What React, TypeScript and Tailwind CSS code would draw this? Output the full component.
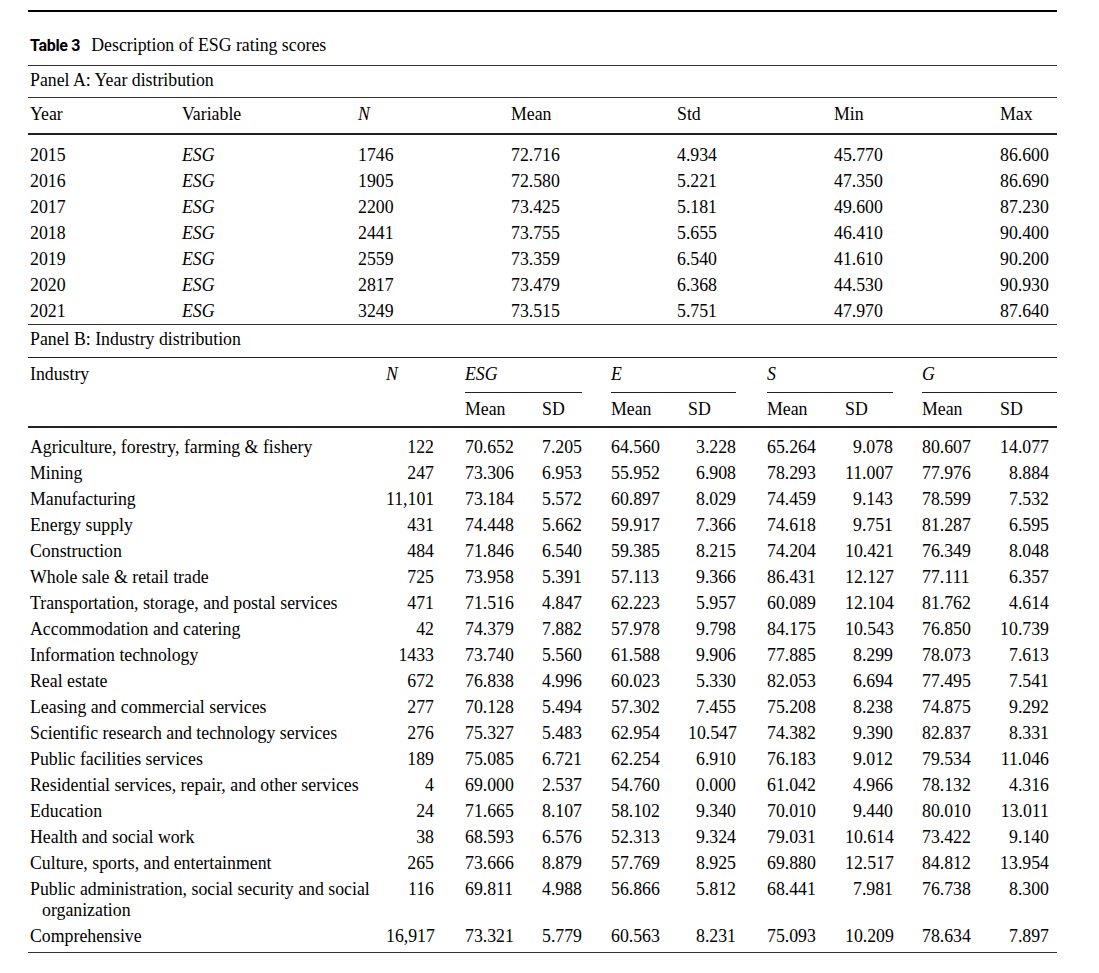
import React from 'react';

const yearRows = [
  ['2015', '1746', '72.716', '4.934', '45.770', '86.600'],
  ['2016', '1905', '72.580', '5.221', '47.350', '86.690'],
  ['2017', '2200', '73.425', '5.181', '49.600', '87.230'],
  ['2018', '2441', '73.755', '5.655', '46.410', '90.400'],
  ['2019', '2559', '73.359', '6.540', '41.610', '90.200'],
  ['2020', '2817', '73.479', '6.368', '44.530', '90.930'],
  ['2021', '3249', '73.515', '5.751', '47.970', '87.640'],
];

// industry, N, ESG mean/sd, E mean/sd, S mean/sd, G mean/sd
const industryRows = [
  ['Agriculture, forestry, farming & fishery', '122', '70.652', '7.205', '64.560', '3.228', '65.264', '9.078', '80.607', '14.077'],
  ['Mining', '247', '73.306', '6.953', '55.952', '6.908', '78.293', '11.007', '77.976', '8.884'],
  ['Manufacturing', '11,101', '73.184', '5.572', '60.897', '8.029', '74.459', '9.143', '78.599', '7.532'],
  ['Energy supply', '431', '74.448', '5.662', '59.917', '7.366', '74.618', '9.751', '81.287', '6.595'],
  ['Construction', '484', '71.846', '6.540', '59.385', '8.215', '74.204', '10.421', '76.349', '8.048'],
  ['Whole sale & retail trade', '725', '73.958', '5.391', '57.113', '9.366', '86.431', '12.127', '77.111', '6.357'],
  ['Transportation, storage, and postal services', '471', '71.516', '4.847', '62.223', '5.957', '60.089', '12.104', '81.762', '4.614'],
  ['Accommodation and catering', '42', '74.379', '7.882', '57.978', '9.798', '84.175', '10.543', '76.850', '10.739'],
  ['Information technology', '1433', '73.740', '5.560', '61.588', '9.906', '77.885', '8.299', '78.073', '7.613'],
  ['Real estate', '672', '76.838', '4.996', '60.023', '5.330', '82.053', '6.694', '77.495', '7.541'],
  ['Leasing and commercial services', '277', '70.128', '5.494', '57.302', '7.455', '75.208', '8.238', '74.875', '9.292'],
  ['Scientific research and technology services', '276', '75.327', '5.483', '62.954', '10.547', '74.382', '9.390', '82.837', '8.331'],
  ['Public facilities services', '189', '75.085', '6.721', '62.254', '6.910', '76.183', '9.012', '79.534', '11.046'],
  ['Residential services, repair, and other services', '4', '69.000', '2.537', '54.760', '0.000', '61.042', '4.966', '78.132', '4.316'],
  ['Education', '24', '71.665', '8.107', '58.102', '9.340', '70.010', '9.440', '80.010', '13.011'],
  ['Health and social work', '38', '68.593', '6.576', '52.313', '9.324', '79.031', '10.614', '73.422', '9.140'],
  ['Culture, sports, and entertainment', '265', '73.666', '8.879', '57.769', '8.925', '69.880', '12.517', '84.812', '13.954'],
  ['Public administration, social security and social organization', '116', '69.811', '4.988', '56.866', '5.812', '68.441', '7.981', '76.738', '8.300'],
  ['Comprehensive', '16,917', '73.321', '5.779', '60.563', '8.231', '75.093', '10.209', '78.634', '7.897'],
];

const gridA = 'grid grid-cols-[154px_176px_153px_166px_157px_166px_57px]';
const gridB = 'grid grid-cols-[358px_48px_108px_40px_106px_48px_109px_48px_107px_49px_8px]';

function IndustryRow({ row }: { row: string[] }) {
  const [name, n, ...vals] = row;
  return (
    <div className={`${gridB} pt-[4px] pb-[1px] leading-[21px]`}>
      <div className="pl-[14px] indent-[-12px]">{name}</div>
      <div className="text-right">{n}</div>
      <div className="pl-[31px]">{vals[0]}</div>
      <div className="text-right">{vals[1]}</div>
      <div className="pl-[29px]">{vals[2]}</div>
      <div className="text-right">{vals[3]}</div>
      <div className="pl-[31px]">{vals[4]}</div>
      <div className="text-right">{vals[5]}</div>
      <div className="pl-[29px]">{vals[6]}</div>
      <div className="text-right">{vals[7]}</div>
      <div />
    </div>
  );
}

export default function App() {
  return (
    <div className="h-[973px] w-[1099px] overflow-hidden bg-white font-['Liberation_Serif',serif] text-[17.8px] text-black">
      <div className="ml-[28px] w-[1029px] pt-[10px]">
        <div className="border-t-2 border-black" />

        <div className="flex h-[53px] items-baseline pt-[23px] pl-[2px] leading-[21px]">
          <span className="mr-[11px] font-['Roboto',sans-serif] text-[16px] leading-none font-bold tracking-[-0.3px]">Table 3</span>
          <span>Description of ESG rating scores</span>
        </div>

        <div className="border-t border-[#333]" />
        <div className="pt-[4px] pb-[6px] pl-[2px] leading-[21px]">Panel A: Year distribution</div>
        <div className="border-t border-[#333]" />

        <div className={`${gridA} pt-[6px] pb-[8px] leading-[21px]`}>
          <div className="pl-[2px]">Year</div>
          <div>Variable</div>
          <div className="italic">N</div>
          <div>Mean</div>
          <div>Std</div>
          <div>Min</div>
          <div>Max</div>
        </div>
        <div className="border-t-2 border-[#222]" />

        <div className="pt-[6px] pb-[1px]">
          {yearRows.map((r) => (
            <div key={r[0]} className={`${gridA} pt-[3.5px] pb-[1.5px] leading-[21px]`}>
              <div className="pl-[2px]">{r[0]}</div>
              <div className="italic">ESG</div>
              <div>{r[1]}</div>
              <div>{r[2]}</div>
              <div>{r[3]}</div>
              <div>{r[4]}</div>
              <div>{r[5]}</div>
            </div>
          ))}
        </div>

        <div className="border-t border-[#333]" />
        <div className="pt-[4px] pb-[7px] pl-[2px] leading-[21px]">Panel B: Industry distribution</div>
        <div className="border-t border-[#222]" />

        <div className={`${gridB} leading-[21px]`}>
          <div className="pt-[5.5px] pl-[2px]">Industry</div>
          <div className="pt-[5.5px] italic">N</div>
          <div className="col-span-2 ml-[31px] border-b border-[#222] pt-[5.5px] pb-[7.5px] italic">ESG</div>
          <div className="col-span-2 ml-[29px] border-b border-[#222] pt-[5.5px] pb-[7.5px] italic">E</div>
          <div className="col-span-2 ml-[31px] border-b border-[#222] pt-[5.5px] pb-[7.5px] italic">S</div>
          <div className="col-span-3 ml-[29px] border-b border-[#222] pt-[5.5px] pb-[7.5px] italic">G</div>

          <div />
          <div />
          <div className="pt-[5.5px] pb-[6.5px] pl-[31px]">Mean</div>
          <div className="pt-[5.5px] pb-[6.5px]">SD</div>
          <div className="pt-[5.5px] pb-[6.5px] pl-[29px]">Mean</div>
          <div className="pt-[5.5px] pb-[6.5px]">SD</div>
          <div className="pt-[5.5px] pb-[6.5px] pl-[31px]">Mean</div>
          <div className="pt-[5.5px] pb-[6.5px]">SD</div>
          <div className="pt-[5.5px] pb-[6.5px] pl-[29px]">Mean</div>
          <div className="pt-[5.5px] pb-[6.5px]">SD</div>
          <div />
        </div>
        <div className="border-t-2 border-[#222]" />

        <div className="pt-[5px] pb-[4px]">
          {industryRows.map((r) => (
            <IndustryRow key={r[0]} row={r} />
          ))}
        </div>
        <div className="border-t border-[#333]" />
      </div>
    </div>
  );
}
